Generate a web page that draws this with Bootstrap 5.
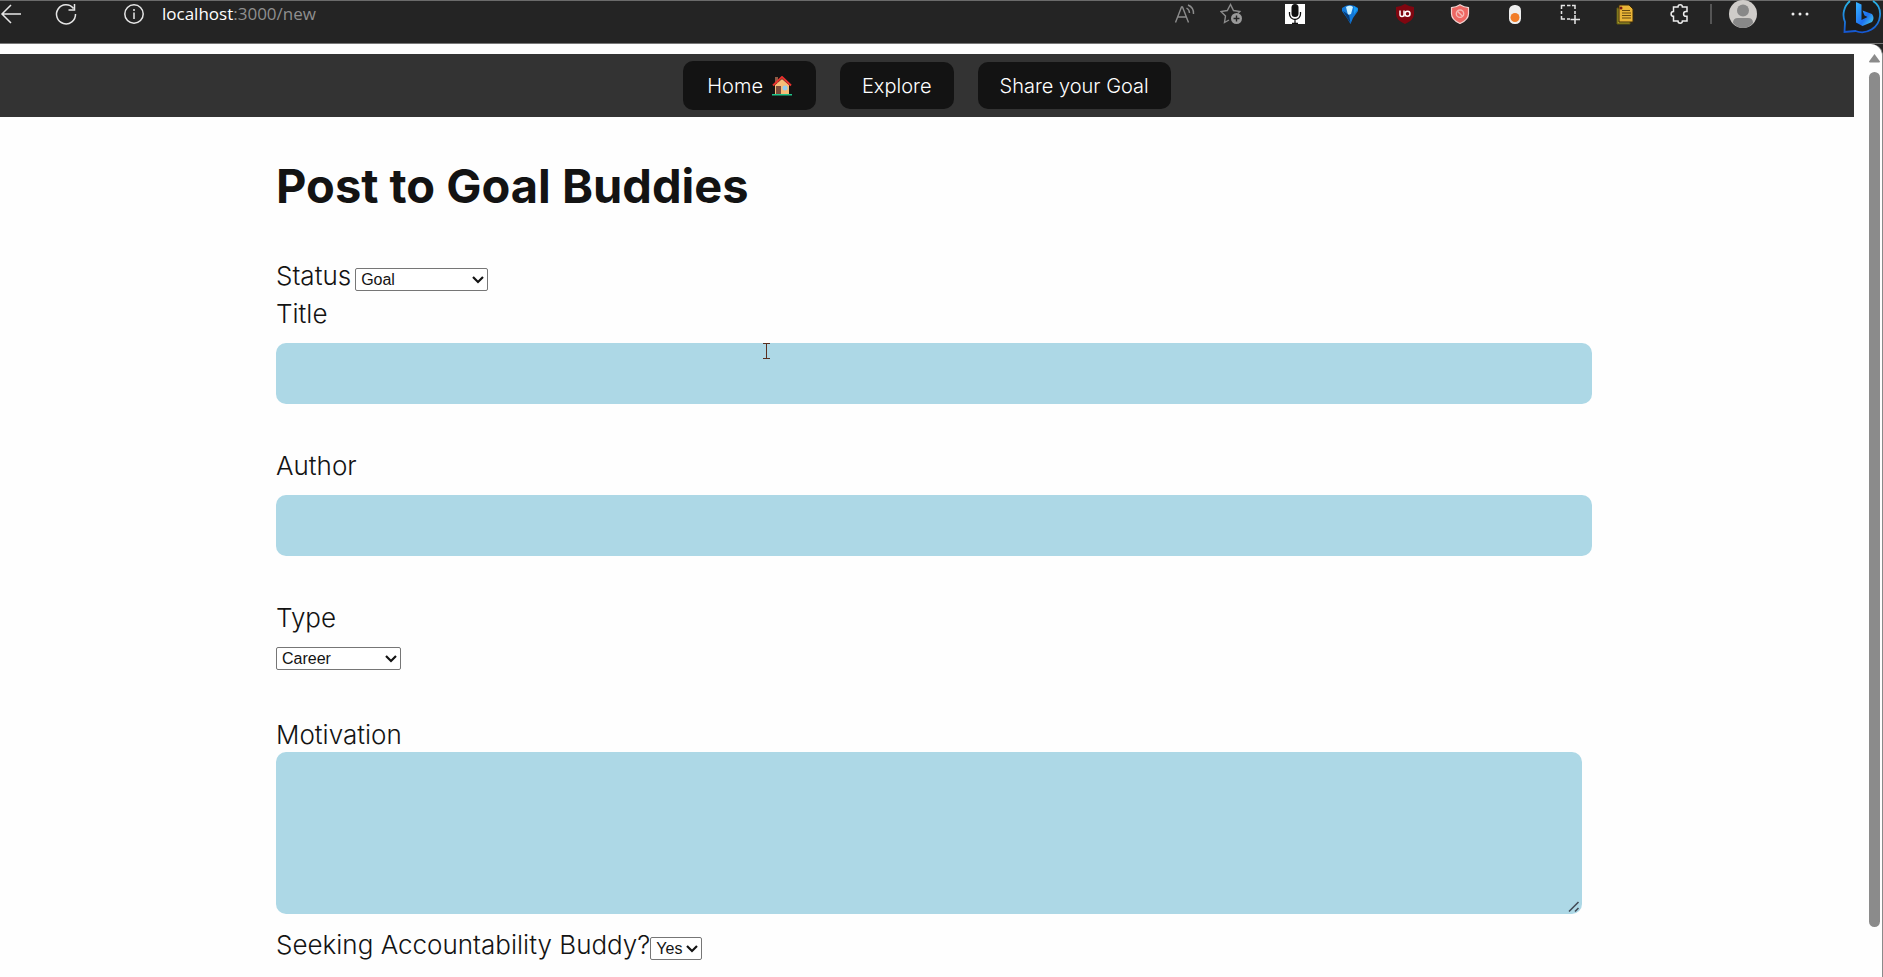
<!DOCTYPE html>
<html lang="en">
<head>
<meta charset="utf-8">
<meta name="viewport" content="width=device-width, initial-scale=1">
<title>Goal Buddies</title>
<link href="https://cdn.jsdelivr.net/npm/bootstrap@5.3.0/dist/css/bootstrap.min.css" rel="stylesheet">
<style>
  html, body { height: 100%; }
  body { font-family: "Century Gothic", Inter, sans-serif; font-weight: 300; color: #131313; background: #242424; overflow: hidden; }
  svg { display: block; flex: none; }

  .browser-bar { height: 44px; padding-bottom: 16px; background: #242424; border-top: 1px solid #6b6b6b; border-bottom: 1px solid #777; }
  .tool { border: 0; padding: 0; background: none; display: flex; align-items: center; justify-content: center; }
  .tool-ext { width: 55px; }
  .tool-info { margin-left: 46px; }
  .address { font: 17px/24px "Open Sans", sans-serif; color: #8f8f8f; margin-left: 18px; }
  .address b { font-weight: 400; color: #fff; }
  .tool-divider { width: 2px; height: 20px; background: #555; margin-left: 3px; }

  .page { background: #fefefe; border-top-right-radius: 12px; border-right: 1px solid #8a8a8a; min-height: 0; }
  .view { padding-top: 10px; min-width: 0; overflow: hidden; }
  .site-nav { height: 63px; background: #333; gap: 24px; }
  .nav-pill { background: #131313; color: #fff; border-radius: 10px; padding: 0 22px; height: 47px; font-size: 20px; line-height: 28px; display: flex; align-items: center; gap: 9px; text-decoration: none; }
  .nav-pill.home { height: 49px; padding: 0 24px; }

  .post-form { margin: 0 262px 0 276px; }
  .post-form h1 { font-size: 47px; line-height: 60px; font-weight: 700; margin: 39px 0 41px; }
  .line { font-size: 26px; line-height: 38px; }
  .line-tight { line-height: 35px; }
  .field { background: #add8e6; border: 0; border-radius: 10px; display: block; width: 100%; padding: 10px; }
  input.field { height: 61px; margin: 10px 0 43px; }
  textarea.field { height: 162px; resize: vertical; width: calc(100% - 10px); margin-bottom: 12px; }
  textarea.field::-webkit-resizer { background: url("data:image/svg+xml,%3Csvg xmlns='http://www.w3.org/2000/svg' width='15' height='15' fill='none' stroke='%23444c58' stroke-width='1.6'%3E%3Cpath d='M2 12.500 11.500 3M8 12.500 11.500 9'/%3E%3C/svg%3E") no-repeat; }
  .pick { appearance: none; font: 16px/21px "Liberation Sans", sans-serif; height: 23px; border: 1px solid #767676; border-radius: 2px; color: #131313; padding: 0 5px;
    background: #fff url("data:image/svg+xml,%3Csvg xmlns='http://www.w3.org/2000/svg' width='12' height='8' fill='none' stroke='%23131313' stroke-width='2.2'%3E%3Cpath d='m1 1 5 5 5-5'/%3E%3C/svg%3E") no-repeat right 3px center; }
  .pick-status { width: 133px; }
  .pick-type { width: 125px; margin: 10px 0 47px; }
  .pick-buddy { width: 52px; }

  .scroller { width: 28px; padding: 10px 2px 0 15px; }
  .scroller-thumb { width: 11px; height: 855px; border-radius: 6px; background: #8b8b8b; margin-top: 9px; }
  .caret { position: absolute; left: 487px; top: 0; }
</style>
</head>
<body class="d-flex flex-column">
<header class="browser-bar d-flex align-items-center justify-content-between flex-shrink-0">
  <div class="d-flex align-items-center">
    <button class="tool" aria-label="Back"><svg width="22" height="22" viewBox="0 0 22 22" fill="none" stroke="#e6e6e6" stroke-width="1.5"><path d="M21 11H2M11 2 2 11l9 9"/></svg></button>
    <button class="tool ms-4 ps-2" aria-label="Reload"><svg width="24" height="24" viewBox="0 0 24 24" fill="none" stroke="#e6e6e6" stroke-width="1.5"><path d="M21.5 12A9.5 9.5 0 1 1 19.5 6.5M20.5 2v6h-6"/></svg></button>
    <button class="tool tool-info" aria-label="Site information"><svg width="20" height="20" viewBox="0 0 20 20" fill="none" stroke="#e6e6e6" stroke-width="1.5"><circle cx="10" cy="10" r="9.2"/><path d="M10 8.5V15M10 5v2"/></svg></button>
    <span class="address"><b>localhost</b>:3000/new</span>
  </div>
  <div class="d-flex align-items-center">
    <button class="tool" aria-label="Read aloud"><svg width="22" height="20" viewBox="0 0 22 20" fill="none" stroke="#8c8c8c" stroke-width="1.4"><path d="M1.5 18.500 7.500 3h1l6 15.500M4 13h8.500M12.500 4a6 6 0 0 1 3 5M14 1a9 9 0 0 1 5.500 9"/></svg></button>
    <button class="tool mx-4" aria-label="Add to favorites"><svg width="23" height="22" viewBox="0 0 23 22"><path d="M9 17 4.500 19.500l1-6.500L1 8.500l6.300-1L10.500 1.500l3 6 6.300 1-2 2" fill="none" stroke="#8c8c8c" stroke-width="1.4"/><circle cx="16.500" cy="15.500" r="5.500" fill="#9a9a9a"/><path d="M16.500 12.500v6M13.500 15.500h6" stroke="#242424" stroke-width="1.400"/></svg></button>
    <button class="tool tool-ext" aria-label="Voice"><svg width="20" height="20" viewBox="0 0 20 20"><path fill="#fff" d="M0 0h20v20H0z"/><rect x="6.500" width="7" height="13" rx="3.500" fill="#111"/><path d="M4.500 8v2a5.500 5.500 0 0 0 11 0V8M10 15v4M7 19.500h6" fill="none" stroke="#111" stroke-width="1.300"/></svg></button>
    <button class="tool tool-ext" aria-label="Gem"><svg width="18" height="20" viewBox="0 0 18 20"><path d="M1 4Q9-2 17 4v3l-5 7-2.500 6L6 14 1 7z" fill="#1278d8"/><path d="M5 3q4-2.500 7 0l-2 7-3 1z" fill="#c9efff"/><path d="m13 2 4 3-4 5z" fill="#159cf5"/><path d="m2 7 4 7 3.500 5L8 11z" fill="#063c79"/></svg></button>
    <button class="tool tool-ext" aria-label="uBlock"><svg width="20" height="20" viewBox="0 0 20 20"><path d="M10 0q4 2.500 9 3v7q0 6-9 10Q1 16 1 10V3q5-.5 9-3z" fill="#800610"/><path d="M5 6.500v4q0 2 2 2t2-2v-4M9 12.500V9" fill="none" stroke="#fff" stroke-width="1.500"/><circle cx="12.500" cy="9.800" r="2.500" fill="none" stroke="#fff" stroke-width="1.500"/></svg></button>
    <button class="tool tool-ext" aria-label="Blocker"><svg width="20" height="20" viewBox="0 0 20 20"><path d="M10 .7q4 2.500 8.500 3v6q0 6-8.500 9.800Q1.500 15.700 1.500 9.700v-6Q6 3.200 10 .7z" fill="#ed6763" stroke="#f3d5d3" stroke-width="1.200"/><circle cx="10" cy="9.700" r="3.700" fill="none" stroke="#f6b9b5" stroke-width="1.400"/><path d="m7.500 7.200 5 5" stroke="#f6b9b5" stroke-width="1.400"/></svg></button>
    <button class="tool tool-ext" aria-label="Toggle"><svg width="12" height="19" viewBox="0 0 12 19"><rect width="12" height="19" rx="5.500" fill="#eee"/><circle cx="6" cy="12.500" r="4.500" fill="#f17c27"/></svg></button>
    <button class="tool tool-ext" aria-label="Capture"><svg width="20" height="20" viewBox="0 0 20 20" fill="none" stroke="#e6e6e6" stroke-width="1.500"><path d="M1.500 5V1.500H5M7 1.500h3.500M12 1.500h3V5M1.500 7v3M1.500 12v3H5M7 15h3M15 7v3M15 11v9M10.500 15.500H20"/></svg></button>
    <button class="tool tool-ext" aria-label="Notes"><svg width="20" height="21" viewBox="0 0 20 21"><path d="M2 4h13v16H2z" fill="#a39a28" stroke="#5f5713"/><path d="M4 1h10l4 4v13H4z" fill="#e9b437" stroke="#3c2a08"/><path d="M7 6.500h8M7 9h9M7 11.500h9M7 14h9" stroke="#6a4a10" stroke-width="1.200"/><circle cx="6" cy="4" r="1.500" fill="#7d1b14"/></svg></button>
    <button class="tool tool-ext" aria-label="Extensions"><svg width="20" height="20" viewBox="0 0 20 20" fill="none" stroke="#ececec" stroke-width="1.500"><path d="M3.500 3H8a2.200 2.200 0 0 1 4.400 0H17v4.500h-1a2.300 2.300 0 0 0 0 4.800h1V17h-4.600a2.200 2.200 0 0 1-4.400 0H3.500v-4.700a2.300 2.300 0 0 1 0-4.800z"/></svg></button>
    <span class="tool-divider"></span>
    <button class="tool ms-3" aria-label="Profile"><svg width="30" height="28" viewBox="0 0 30 28"><circle cx="15" cy="14" r="14" fill="#cfccc9"/><circle cx="15" cy="10.500" r="6" fill="#888"/><path d="M5 23q0-5 5-5h10q5 0 5 5-4 5-10 5T5 23z" fill="#888"/></svg></button>
    <button class="tool mx-4 px-2" aria-label="More"><svg width="20" height="4" viewBox="0 0 20 4" fill="#eee"><circle cx="3" cy="2" r="1.500"/><circle cx="10" cy="2" r="1.500"/><circle cx="17" cy="2" r="1.500"/></svg></button>
    <button class="tool" aria-label="Bing"><svg width="41" height="40" viewBox="0 0 41 40"><defs><linearGradient id="ring" x2="0" y2="1"><stop stop-color="#29b5e8"/><stop offset="1" stop-color="#1557d2"/></linearGradient><linearGradient id="bee" x2="1" y2="1"><stop stop-color="#38b6ff"/><stop offset=".6" stop-color="#1d6ff0"/><stop offset="1" stop-color="#4fe0e8"/></linearGradient></defs><path d="M8 7A18 18 0 0 0 3 28l-.5 10 11-1A18 18 0 0 0 38 22Q39 12 31 7" fill="#1c1c1c" stroke="url(#ring)" stroke-width="1.800"/><path d="m14 8 5.500 2.500V26l6-3-3-1.500-2-5 9.500 3.500q3 4 0 8L20.500 32 14 28.500z" fill="url(#bee)"/></svg></button>
  </div>
</header>

<div class="page d-flex flex-grow-1">
  <div class="view flex-grow-1">
    <nav class="site-nav d-flex align-items-center justify-content-center">
      <a class="nav-pill home" href="#">Home
        <svg width="20" height="20" viewBox="0 0 20 20"><path d="M3 1h3v6H3z" fill="#8d5a45"/><path d="M3 9l7-6 7 6v9H3z" fill="#f6bd78"/><path d="M1 9.500 10 1l9 8.500" fill="none" stroke="#e9312d" stroke-width="2"/><path d="M4 10h5v8H4z" fill="#7b4b3c"/><circle cx="13" cy="12" r="2.500" fill="#93cdf0"/><path d="M0 18h20v1.500H0z" fill="#1fc58a"/></svg>
      </a>
      <a class="nav-pill" href="#">Explore</a>
      <a class="nav-pill" href="#">Share your Goal</a>
    </nav>

    <form class="post-form">
      <h1>Post to Goal Buddies</h1>
      <div class="line d-flex align-items-baseline gap-1">
        <label for="status">Status</label>
        <select class="pick pick-status" id="status"><option>Goal</option><option>Accomplished</option></select>
      </div>
      <label class="line d-block" for="title">Title</label>
      <div class="position-relative">
        <input class="field" type="text" id="title">
        <svg class="caret" width="7" height="16" viewBox="0 0 7 16" stroke="#5a3020" shape-rendering="crispEdges"><path d="M0 .5h7M3.500 0v16M0 15.500h7"/></svg>
      </div>
      <label class="line d-block" for="author">Author</label>
      <input class="field" type="text" id="author">
      <label class="line d-block" for="type">Type</label>
      <select class="pick pick-type d-block" id="type"><option>Career</option><option>Health</option></select>
      <label class="line line-tight d-block" for="motivation">Motivation</label>
      <textarea class="field" id="motivation"></textarea>
      <div class="line d-flex align-items-baseline">
        <label for="buddy">Seeking Accountability Buddy?</label>
        <select class="pick pick-buddy" id="buddy"><option>Yes</option><option>No</option></select>
      </div>
    </form>
  </div>
  <div class="scroller flex-shrink-0" aria-hidden="true">
    <svg width="11" height="9" viewBox="0 0 11 9"><path d="M5.500 0 11 7.500Q11 8.500 10 8.500H1Q0 8.500 0 7.500z" fill="#8b8b8b"/></svg>
    <div class="scroller-thumb"></div>
  </div>
</div>
<script src="https://cdn.jsdelivr.net/npm/bootstrap@5.3.0/dist/js/bootstrap.bundle.min.js"></script>
</body>
</html>
